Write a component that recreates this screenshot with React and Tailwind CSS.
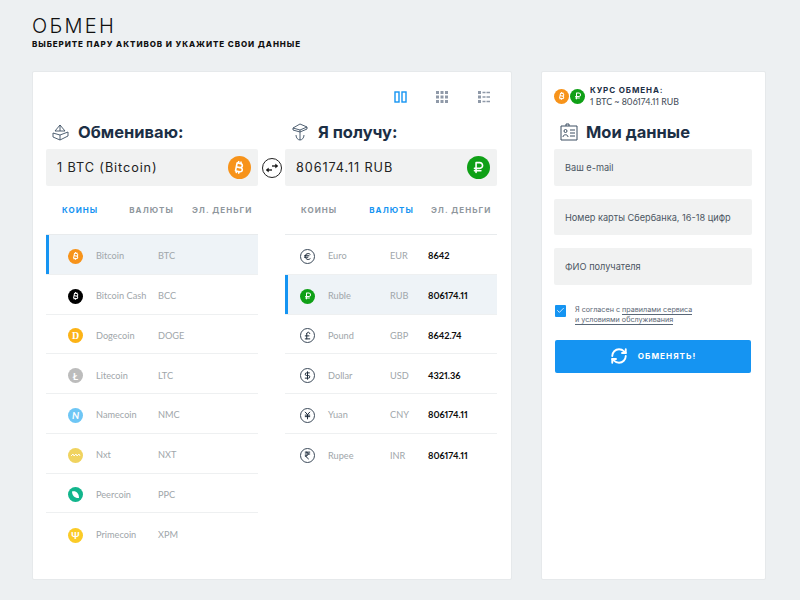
import React from "react";
import { FaBitcoinSign, FaRubleSign } from "react-icons/fa6";
import { Euro, PoundSterling, DollarSign, JapaneseYen, IndianRupee, RefreshCw, Check } from "lucide-react";

const Btc = ({ cls = "bg-[#f7931a]", size = 8 }) => (
  <span className={`flex items-center justify-center rounded-full text-white ${cls} w-full h-full`}>
    <FaBitcoinSign size={size} className="rotate-12" />
  </span>
);
const Rub = ({ size = 8 }) => (
  <span className="flex items-center justify-center rounded-full text-white bg-[#0fa016] w-full h-full">
    <FaRubleSign size={size} />
  </span>
);
const Letter = ({ bg, children, cls = "" }) => (
  <span className={`flex items-center justify-center rounded-full text-white w-full h-full text-[10px] leading-none font-bold ${bg} ${cls}`}>{children}</span>
);

const coins = [
  { n: "Bitcoin", c: "BTC", i: <Btc />, active: true },
  { n: "Bitcoin Cash", c: "BCC", i: <Btc cls="bg-black" /> },
  { n: "Dogecoin", c: "DOGE", i: <Letter bg="bg-[#fcb316]" cls="font-['Liberation_Serif']">D</Letter> },
  { n: "Litecoin", c: "LTC", i: <Letter bg="bg-[#bcbcbc]">Ł</Letter> },
  { n: "Namecoin", c: "NMC", i: <Letter bg="bg-[#6ec6f5]" cls="italic">N</Letter> },
  {
    n: "Nxt", c: "NXT",
    i: (
      <span className="flex items-center justify-center rounded-full bg-[#f0d35f] w-full h-full">
        <svg width="10" height="4" viewBox="0 0 10 4" fill="none" stroke="#fff" strokeWidth="0.9"><path d="M0 3 2 1 3 3 5 1 6 3 8 1 9 3" /></svg>
      </span>
    ),
  },
  {
    n: "Peercoin", c: "PPC",
    i: (
      <span className="flex items-center justify-center rounded-full bg-[#12b58c] w-full h-full">
        <svg width="9" height="9" viewBox="0 0 9 9" fill="#fff"><path d="M1 1.500C4.500.3 8 2.500 8 8 4 8.500 1 5.500 1 1.500Z" /></svg>
      </span>
    ),
  },
  { n: "Primecoin", c: "XPM", i: <Letter bg="bg-[#fbcb27]">Ψ</Letter> },
];

const CurIcon = ({ I }) => (
  <span className="flex items-center justify-center rounded-full border border-[#3c4a5a] text-[#1c2a3a] w-full h-full">
    <I size={9} strokeWidth={2.6} />
  </span>
);

const curs = [
  { n: "Euro", c: "EUR", v: "8642", i: <CurIcon I={Euro} /> },
  { n: "Ruble", c: "RUB", v: "806174.11", i: <Rub />, active: true },
  { n: "Pound", c: "GBP", v: "8642.74", i: <CurIcon I={PoundSterling} /> },
  { n: "Dollar", c: "USD", v: "4321.36", i: <CurIcon I={DollarSign} /> },
  { n: "Yuan", c: "CNY", v: "806174.11", i: <CurIcon I={JapaneseYen} /> },
  { n: "Rupee", c: "INR", v: "806174.11", i: <CurIcon I={IndianRupee} /> },
];

function Row({ r, right, last }) {
  return (
    <div className={`relative flex items-center h-[39.75px] pt-[4px] text-[9.2px] font-['Lato','Inter',sans-serif] text-[#a0a6aa] ${last ? "" : "border-b border-[#eef0f1]"} ${r.active ? "bg-[#eef3f7]" : ""}`}>
      {r.active && <span className="absolute left-0 top-0 bottom-0 w-[3px] bg-[#1594f2]" />}
      <span className={`w-[15px] h-[15px] shrink-0 ${right ? "ml-[15px]" : "ml-[22px]"}`}>{r.i}</span>
      <span className="shrink-0 ml-[13px] w-[62px]">{r.n}</span>
      <span className={`shrink-0 ${right ? "w-[38px]" : "w-[30px]"}`}>{r.c}</span>
      {r.v && <span className="font-bold text-[#0c0c0c] proportional-nums">{r.v}</span>}
    </div>
  );
}

function Tabs({ active, second, third, first }) {
  const labels = ["КОИНЫ", "ВАЛЮТЫ", "ЭЛ. ДЕНЬГИ"];
  const gaps = [first, second, third];
  return (
    <div className="flex items-center h-[49px] text-[8px] font-bold tracking-[1.05px] text-[#8f979d] border-b border-[#e8ebed]">
      {labels.map((t, i) => (
        <span key={t} className={`${gaps[i]} ${i === active ? "text-[#1594f2]" : ""}`}>{t}</span>
      ))}
    </div>
  );
}

function Heading({ icon, children, cls = "" }) {
  return (
    <div className={`flex items-center h-[32px] pb-[2px] text-[#1c2f45] font-bold text-[16.5px] ${cls}`}>
      {icon}
      {children}
    </div>
  );
}

const Field = ({ children, cls = "" }) => (
  <div className={`flex items-center rounded-[2px] bg-[#f1f2f2] text-[#4b5662] ${cls}`}>{children}</div>
);

const Swap = () => (
  <svg width="14" height="10" viewBox="0 0 14 10" fill="#111" stroke="#111" strokeWidth="1.3">
    <path d="M7 3h4" fill="none" />
    <path d="M10.500 1 13 3l-2.500 2Z" strokeWidth="0.4" />
    <path d="M7 7H3" fill="none" />
    <path d="M3.500 5 1 7l2.500 2Z" strokeWidth="0.4" />
  </svg>
);

export default function App() {
  return (
    <div className="w-[800px] h-[600px] overflow-hidden bg-[#edf0f2] px-[32px] font-['Inter',sans-serif]">
      <div className="h-[71px] pt-[14px]">
        <div className="text-[20px] leading-[24px] tracking-[2.3px] font-light text-[#111]">ОБМЕН</div>
        <div className="text-[8px] leading-[12px] font-extrabold tracking-[0.93px] text-[#111]">ВЫБЕРИТЕ ПАРУ АКТИВОВ И УКАЖИТЕ СВОИ ДАННЫЕ</div>
      </div>
      <div className="flex gap-[29px]">
        <div className="w-[480px] h-[509px] bg-white rounded-[2px] border border-[#e6e9eb] pl-[13px] pr-[14px]">
          <div className="flex h-[45px] items-end pb-[14px] pl-[348px] gap-[29px]">
            <svg width="13" height="12" viewBox="0 0 13 12" fill="none" stroke="#1594f2" strokeWidth="1.4"><rect x="1" y="1" width="4" height="10" /><rect x="8" y="1" width="4" height="10" /></svg>
            <svg width="12" height="12" viewBox="0 0 12 12" fill="#8f99a8"><path d="M0 0h3v3H0zM4.500 0h3v3h-3zM9 0h3v3H9zM0 4.500h3v3H0zM4.500 4.500h3v3h-3zM9 4.500h3v3H9zM0 9h3v3H0zM4.500 9h3v3h-3zM9 9h3v3H9z" /></svg>
            <svg width="12" height="12" viewBox="0 0 12 12" fill="#8f99a8" className="ml-[1px]"><path d="M0 0h3v3H0zM4.500 .7h3v1.600h-3zM8.500 .7h3.500v1.600H8.500zM0 4.500h3v3H0zM4.500 5.200h3v1.600h-3zM8.500 5.200h3.500v1.600H8.500zM0 9h3v3H0zM4.500 9.700h3v1.600h-3zM8.500 9.700h3.500v1.600H8.500z" /></svg>
          </div>
          <div className="flex justify-between">
            <div className="w-[212px]">
              <Heading cls="pl-[5px]" icon={
                <svg width="19" height="19" viewBox="0 0 19 19" fill="none" stroke="#3c4f63" strokeWidth="0.9" className="mr-[8px]"><path d="M9 2 4 8h10L9 2Zm0 0v6M2 10l7 2 8-3M2 10v4l7 3 8-4V9M9 12v5" /></svg>
              }>Обмениваю:</Heading>
              <Field cls="h-[37px] text-[12.7px] tracking-[0.9px] text-[#222] pl-[11px] pr-[7px] justify-between">
                <span>1 BTC (Bitcoin)</span>
                <span className="w-[23px] h-[23px]"><Btc size={13} /></span>
              </Field>
              <Tabs active={0} first="ml-[16px]" second="ml-[31px]" third="ml-[18px]" />
              {coins.map((r, i) => <Row key={r.c} r={r} last={i === coins.length - 1} />)}
            </div>
            <div className="flex items-start pt-[32px]">
              <div className="mt-[9px] flex items-center justify-center w-[20px] h-[20px] rounded-full border border-[#222] bg-white">
                <Swap />
              </div>
            </div>
            <div className="w-[212px]">
              <Heading cls="pl-[6px]" icon={
                <svg width="18" height="19" viewBox="0 0 18 19" fill="none" stroke="#3c4f63" strokeWidth="0.9" className="mr-[9px]"><path d="M2 5 9 1l7 3-7 3-7-2ZM2 5v2l7 2 7-3V4M9 7v10M5 12c0 3 2 5 4 5s4-2 4-5" /></svg>
              }>Я получу:</Heading>
              <Field cls="h-[37px] text-[12.7px] tracking-[0.9px] text-[#222] pl-[11px] pr-[7px] justify-between">
                <span>806174.11 RUB</span>
                <span className="w-[23px] h-[23px]"><Rub size={13} /></span>
              </Field>
              <Tabs active={1} first="ml-[16px]" second="ml-[32px]" third="ml-[17px]" />
              {curs.map((r, i) => <Row key={r.c} r={r} right last={i === curs.length - 1} />)}
            </div>
          </div>
        </div>
        <div className="w-[225px] h-[509px] bg-white rounded-[2px] border border-[#e6e9eb] px-[12px]">
          <div className="flex items-center pt-[13px] h-[35px]">
            <span className="w-[15px] h-[15px]"><Btc /></span>
            <span className="w-[15px] h-[15px] ml-[1px]"><Rub /></span>
            <div className="ml-[5px] text-[#3b4754]">
              <div className="text-[8px] leading-[11px] font-bold tracking-[0.9px] text-[#1c2f45]">КУРС ОБМЕНА:</div>
              <div className="text-[8.8px] leading-[11px] font-['Lato',sans-serif] proportional-nums">1 BTC ~ 806174.11 RUB</div>
            </div>
          </div>
          <Heading cls="mt-[10px]" icon={
            <svg width="18" height="18" viewBox="0 0 18 18" fill="none" stroke="#3c4f63" strokeWidth="1" className="ml-[6px] mr-[8px]"><path d="M1 3h16v14H1zM6 3V1h3v2M4 8a1.500 1.500 0 1 0 3 0 1.500 1.500 0 1 0-3 0M3 14c0-3 5-3 5 0M10 7h5M10 10h5M10 13h5" /></svg>
          }>Мои данные</Heading>
          <div className="flex flex-col gap-[13px] w-[198px] text-[9.2px]">
            <Field cls="h-[36.5px] pl-[11px] pt-[2px]">Ваш e-mail</Field>
            <Field cls="h-[36.5px] pl-[11px] pt-[2px]">Номер карты Сбербанка, 16-18 цифр</Field>
            <Field cls="h-[36.5px] pl-[11px] pt-[2px]">ФИО получателя</Field>
          </div>
          <div className="flex mt-[20px] ml-[1px]">
            <span className="flex items-center justify-center w-[11px] h-[12px] rounded-[1px] bg-[#1594f2] text-white"><Check size={9} strokeWidth={2} /></span>
            <div className="ml-[9px] text-[7.2px] leading-[10px] text-[#5a6674]">
              <div>Я согласен с <span className="border-b border-[#5a6878]">правилами сервиса</span></div>
              <div><span className="border-b border-[#5a6878]">и условиями обслуживания</span></div>
            </div>
          </div>
          <div className="flex items-center justify-center w-[196px] h-[33px] mt-[15px] ml-[1px] rounded-[2px] bg-[#1594f2] text-white text-[8.2px] font-bold tracking-[1px]">
            <RefreshCw size={18} strokeWidth={2.5} className="mr-[10px]" />
            ОБМЕНЯТЬ!
          </div>
        </div>
      </div>
    </div>
  );
}
